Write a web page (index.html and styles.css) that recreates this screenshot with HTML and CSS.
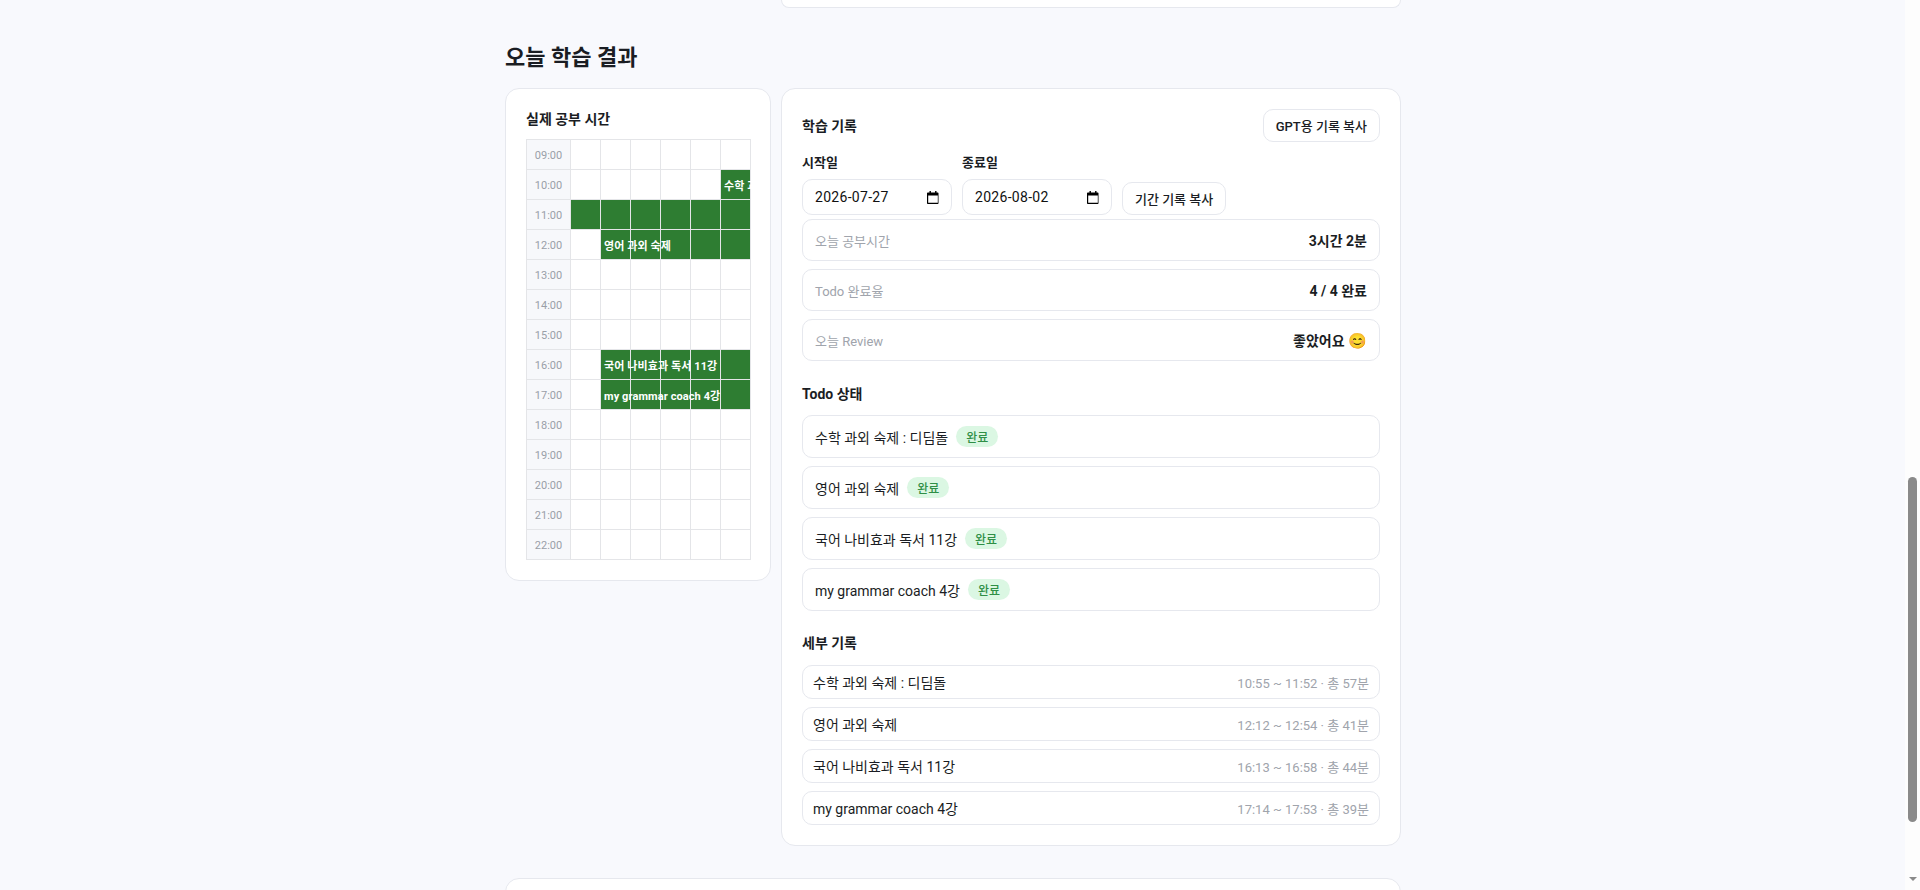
FILE: index.html
```html
<!DOCTYPE html>
<html lang="ko">
<head>
    <meta charset="UTF-8">
    <meta name="viewport" content="width=device-width, initial-scale=1.0">
    <title>오늘 학습 결과</title>
    <link rel="stylesheet" href="styles.css">
</head>
<body>
    <div class="page">
        <main class="content">
            <div class="top-card"></div>

            <h2 class="page-title">오늘 학습 결과</h2>

            <div class="result-layout">
                <section class="card time-card">
                    <h3 class="card-title">실제 공부 시간</h3>
                    <div class="timetable">
                        <div class="time">09:00</div><div class="cell"></div><div class="cell"></div><div class="cell"></div><div class="cell"></div><div class="cell"></div><div class="cell"></div>
                        <div class="time">10:00</div><div class="cell"></div><div class="cell"></div><div class="cell"></div><div class="cell"></div><div class="cell"></div><div class="cell on"><span>수학 과외 숙제 : 디딤돌</span></div>
                        <div class="time">11:00</div><div class="cell on"></div><div class="cell on"></div><div class="cell on"></div><div class="cell on"></div><div class="cell on"></div><div class="cell on"></div>
                        <div class="time">12:00</div><div class="cell"></div><div class="cell on"><span>영어 과외 숙제</span></div><div class="cell on"></div><div class="cell on"></div><div class="cell on"></div><div class="cell on"></div>
                        <div class="time">13:00</div><div class="cell"></div><div class="cell"></div><div class="cell"></div><div class="cell"></div><div class="cell"></div><div class="cell"></div>
                        <div class="time">14:00</div><div class="cell"></div><div class="cell"></div><div class="cell"></div><div class="cell"></div><div class="cell"></div><div class="cell"></div>
                        <div class="time">15:00</div><div class="cell"></div><div class="cell"></div><div class="cell"></div><div class="cell"></div><div class="cell"></div><div class="cell"></div>
                        <div class="time">16:00</div><div class="cell"></div><div class="cell on"><span>국어 나비효과 독서 11강</span></div><div class="cell on"></div><div class="cell on"></div><div class="cell on"></div><div class="cell on"></div>
                        <div class="time">17:00</div><div class="cell"></div><div class="cell on"><span>my grammar coach 4강</span></div><div class="cell on"></div><div class="cell on"></div><div class="cell on"></div><div class="cell on"></div>
                        <div class="time">18:00</div><div class="cell"></div><div class="cell"></div><div class="cell"></div><div class="cell"></div><div class="cell"></div><div class="cell"></div>
                        <div class="time">19:00</div><div class="cell"></div><div class="cell"></div><div class="cell"></div><div class="cell"></div><div class="cell"></div><div class="cell"></div>
                        <div class="time">20:00</div><div class="cell"></div><div class="cell"></div><div class="cell"></div><div class="cell"></div><div class="cell"></div><div class="cell"></div>
                        <div class="time">21:00</div><div class="cell"></div><div class="cell"></div><div class="cell"></div><div class="cell"></div><div class="cell"></div><div class="cell"></div>
                        <div class="time">22:00</div><div class="cell"></div><div class="cell"></div><div class="cell"></div><div class="cell"></div><div class="cell"></div><div class="cell"></div>
                    </div>
                </section>

                <section class="card record-card">
                    <div class="record-head">
                        <h3 class="card-title">학습 기록</h3>
                        <button class="btn">GPT용 기록 복사</button>
                    </div>

                    <div class="range">
                        <div class="range-field">
                            <span class="range-label">시작일</span>
                            <div class="date-input">
                                <span>2026-07-27</span>
                                <svg class="date-icon" viewBox="0 0 12 13"><path d="M2.500 0h1.400v1.500h4.200V0h1.400v1.500h1.200c.5 0 .8.4.8.8v9.900c0 .5-.3.8-.8.8H.8c-.5 0-.8-.3-.8-.8V2.300c0-.4.3-.8.8-.8h1.700zM1.200 4.600v7.200h9.600V4.600z"/></svg>
                            </div>
                        </div>
                        <div class="range-field">
                            <span class="range-label">종료일</span>
                            <div class="date-input">
                                <span>2026-08-02</span>
                                <svg class="date-icon" viewBox="0 0 12 13"><path d="M2.500 0h1.400v1.500h4.200V0h1.400v1.500h1.200c.5 0 .8.4.8.8v9.900c0 .5-.3.8-.8.8H.8c-.5 0-.8-.3-.8-.8V2.300c0-.4.3-.8.8-.8h1.700zM1.200 4.600v7.200h9.600V4.600z"/></svg>
                            </div>
                        </div>
                        <button class="btn">기간 기록 복사</button>
                    </div>

                    <div class="summary">
                        <div class="summary-row"><span class="summary-key">오늘 공부시간</span><strong>3시간 2분</strong></div>
                        <div class="summary-row"><span class="summary-key">Todo 완료율</span><strong>4 / 4 완료</strong></div>
                        <div class="summary-row"><span class="summary-key">오늘 Review</span><strong>좋았어요 <span class="emoji">😊</span></strong></div>
                    </div>

                    <h4 class="sub-title">Todo 상태</h4>
                    <div class="todo-list">
                        <div class="todo-row">수학 과외 숙제 : 디딤돌 <span class="badge">완료</span></div>
                        <div class="todo-row">영어 과외 숙제 <span class="badge">완료</span></div>
                        <div class="todo-row">국어 나비효과 독서 11강 <span class="badge">완료</span></div>
                        <div class="todo-row">my grammar coach 4강 <span class="badge">완료</span></div>
                    </div>

                    <h4 class="sub-title">세부 기록</h4>
                    <div class="detail-list">
                        <div class="detail-row"><span>수학 과외 숙제 : 디딤돌</span><span class="detail-time">10:55 ~ 11:52 · 총 57분</span></div>
                        <div class="detail-row"><span>영어 과외 숙제</span><span class="detail-time">12:12 ~ 12:54 · 총 41분</span></div>
                        <div class="detail-row"><span>국어 나비효과 독서 11강</span><span class="detail-time">16:13 ~ 16:58 · 총 44분</span></div>
                        <div class="detail-row"><span>my grammar coach 4강</span><span class="detail-time">17:14 ~ 17:53 · 총 39분</span></div>
                    </div>
                </section>
            </div>

            <div class="bottom-card"></div>
        </main>

        <div class="scrollbar">
            <div class="thumb"></div>
            <div class="arrow-down"></div>
        </div>
    </div>
</body>
</html>
```

FILE: styles.css
```css
* {
    box-sizing: border-box;
    margin: 0;
    padding: 0;
}

html, body {
    height: 100%;
    overflow: hidden;
}

body {
    font-family: Roboto, "Noto Sans CJK KR", sans-serif;
    color: #1a1d23;
    background-color: #f8f9fd;
}

.page {
    display: flex;
    height: 890px;
}

.content {
    flex: 1;
    height: 890px;
    overflow: hidden;
    padding-left: 505px;
    padding-right: 504px;
}

.top-card {
    height: 8px;
    margin-left: 276px;
    background-color: #fff;
    border: 1px solid #e6e8ee;
    border-top: none;
    border-radius: 0 0 14px 14px;
}

.page-title {
    font-size: 22px;
    font-weight: 700;
    line-height: 32px;
    margin-top: 34px;
    margin-bottom: 14px;
}

.result-layout {
    display: flex;
    align-items: flex-start;
    gap: 10px;
}

.card {
    background-color: #fff;
    border: 1px solid #e6e8ee;
    border-radius: 14px;
    padding: 20px;
}

.time-card {
    width: 266px;
    flex-shrink: 0;
    height: 493px;
}

.record-card {
    flex: 1;
    height: 758px;
}

.card-title {
    font-size: 14px;
    font-weight: 700;
    line-height: 20px;
}

.timetable {
    display: grid;
    grid-template-columns: 44px repeat(6, 30px);
    grid-auto-rows: 30px;
    margin-top: 10px;
    width: 225px;
    overflow: hidden;
    border-top: 1px solid #e4e5e8;
    border-left: 1px solid #e4e5e8;
}

.time {
    display: flex;
    align-items: center;
    justify-content: center;
    padding-top: 2px;
    font-size: 11px;
    color: #9a9fa8;
    background-color: #f7f8fb;
    border-right: 1px solid #e4e5e8;
    border-bottom: 1px solid #e4e5e8;
}

.cell {
    display: flex;
    align-items: center;
    border-right: 1px solid #e4e5e8;
    border-bottom: 1px solid #e4e5e8;
    white-space: nowrap;
}

.cell.on {
    background-color: #2e7d32;
}

.cell span {
    position: relative;
    padding-left: 3px;
    font-size: 11px;
    font-weight: 700;
    letter-spacing: .1px;
    color: #fff;
}

.record-head {
    display: flex;
    align-items: center;
    justify-content: space-between;
}

.btn {
    height: 33px;
    padding: 0 12px;
    font-family: inherit;
    font-size: 13px;
    font-weight: 500;
    color: #1a1d23;
    background-color: #fff;
    border: 1px solid #e6e8ee;
    border-radius: 10px;
}

.range {
    display: flex;
    align-items: flex-end;
    gap: 10px;
    margin-top: 12px;
}

.range-field {
    display: flex;
    flex-direction: column;
    gap: 7px;
}

.range-label {
    font-size: 13px;
    font-weight: 700;
    line-height: 18px;
}

.date-input {
    display: flex;
    align-items: center;
    justify-content: space-between;
    width: 150px;
    height: 36px;
    padding: 0 12px;
    font-size: 14px;
    letter-spacing: .3px;
    color: #111;
    background-color: #fff;
    border: 1px solid #e6e8ee;
    border-radius: 10px;
}

.date-icon {
    width: 12px;
    height: 13px;
}

.summary {
    display: flex;
    flex-direction: column;
    gap: 8px;
    margin-top: 4px;
}

.summary-row {
    display: flex;
    align-items: center;
    justify-content: space-between;
    height: 42px;
    padding: 0 12px;
    font-size: 14px;
    border: 1px solid #e6e8ee;
    border-radius: 10px;
}

.summary-key {
    color: #a0a4ac;
    font-size: 13px;
}

.summary-row strong {
    font-weight: 700;
}

.emoji {
    font-size: 15px;
}

.sub-title {
    margin-top: 23px;
    font-size: 14px;
    font-weight: 700;
    line-height: 20px;
}

.todo-list {
    display: flex;
    flex-direction: column;
    gap: 8px;
    margin-top: 11px;
}

.todo-row {
    display: flex;
    align-items: center;
    gap: 8px;
    height: 43px;
    padding: 0 12px;
    font-size: 14px;
    border: 1px solid #e6e8ee;
    border-radius: 10px;
}

.badge {
    padding: 2px 10px;
    font-size: 12px;
    font-weight: 500;
    color: #2f8f46;
    background-color: #dbf7e3;
    border-radius: 999px;
}

.todo-list + .sub-title {
    margin-top: 22px;
}

.detail-list {
    display: flex;
    flex-direction: column;
    gap: 8px;
    margin-top: 12px;
}

.detail-row {
    display: flex;
    align-items: center;
    justify-content: space-between;
    height: 34px;
    padding: 0 10px;
    font-size: 14px;
    border: 1px solid #e6e8ee;
    border-radius: 10px;
}

.detail-time {
    font-size: 13px;
    color: #a0a4ac;
}

.bottom-card {
    height: 40px;
    margin-top: 32px;
    background-color: #fff;
    border: 1px solid #e6e8ee;
    border-radius: 14px;
}

.scrollbar {
    display: flex;
    flex-direction: column;
    align-items: center;
    width: 15px;
    height: 890px;
    background-color: #fdfdfd;
}

.thumb {
    width: 9px;
    height: 345px;
    margin-top: 477px;
    background-color: #8a8a8a;
    border-radius: 5px;
}

.arrow-down {
    margin-top: 55px;
    border-left: 4px solid transparent;
    border-right: 4px solid transparent;
    border-top: 4px solid #8a8a8a;
}
```
